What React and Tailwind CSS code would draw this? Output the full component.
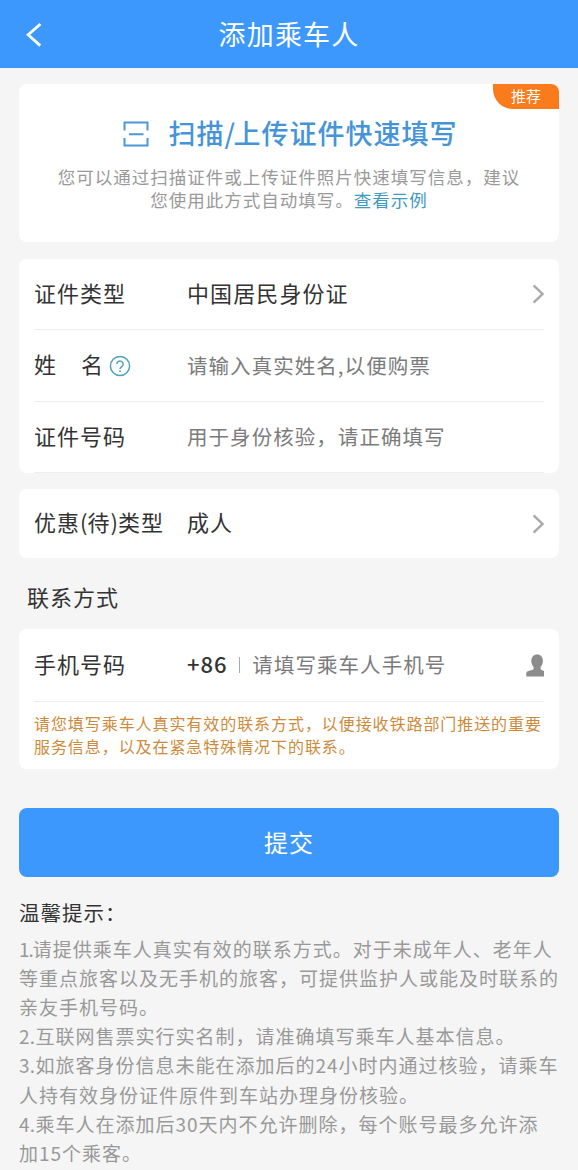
import clsx from 'clsx';

const tips = [
  ['1.', '请提供乘车人真实有效的联系方式。对于未成年人、老年人'],
  ['', '等重点旅客以及无手机的旅客，可提供监护人或能及时联系的'],
  ['', '亲友手机号码。'],
  ['2.', '互联网售票实行实名制，请准确填写乘车人基本信息。'],
  ['3.', '如旅客身份信息未能在添加后的24小时内通过核验，请乘车'],
  ['', '人持有效身份证件原件到车站办理身份核验。'],
  ['4.', '乘车人在添加后30天内不允许删除，每个账号最多允许添'],
  ['', '加15个乘客。'],
];

function BackIcon() {
  return (
    <svg width="18" height="26" viewBox="0 0 18 26" fill="none" stroke="#fff" strokeWidth="2.8">
      <path d="M16.4 3 4.2 13.8l12 10.8" />
    </svg>
  );
}

function ScanIcon() {
  return (
    <svg width="26" height="26" viewBox="0 0 26 26" fill="none" stroke="#4c97d6" strokeWidth="2">
      <path d="M1.5 9.5V1.5h23v8M1.5 17v7.5h23V17M6 13.2h14.5" />
    </svg>
  );
}

function HelpIcon() {
  return (
    <svg width="22" height="22" viewBox="0 0 22 22" fill="none" stroke="#4fa3b5" strokeWidth="1.5">
      <circle cx="11" cy="11" r="9.6" />
      <path d="M7.9 9.1a3.1 3.1 0 1 1 4.9 2.5c-1.2.8-1.8 1.2-1.8 2.5" />
      <path d="M11 15.2v1.7" />
    </svg>
  );
}

function ArrowIcon() {
  return (
    <svg width="12" height="20" viewBox="0 0 12 20" fill="none" stroke="#a9a9a9" strokeWidth="2.4">
      <path d="M1.6 1.4 10.5 10l-8.9 8.6" />
    </svg>
  );
}

function PersonIcon() {
  return (
    <svg width="18" height="23" viewBox="0 0 18 23" fill="#8c8c8c">
      <path d="M11.2.4c3.5 0 5.7 2.5 5.7 6.3 0 2.5-.9 4.8-2.3 6.3v1.6c0 .8.3 1.2.9 1.4l2.5 1v5.6H.3v-3c0-1.2.6-1.9 1.6-2.3l4.6-1.5c.8-.3 1.1-.7 1.1-1.4V13c-1.4-1.5-2.3-3.8-2.3-6.3 0-3.8 2.4-6.3 5.9-6.3Z" />
    </svg>
  );
}

function Card({ className, children }) {
  return <section className={clsx('mx-[19px] rounded-lg bg-white px-[15px]', className)}>{children}</section>;
}

function Row({ label, className, children }) {
  return (
    <div className={clsx('flex items-center', className)}>
      <div className="flex w-[153px] shrink-0 items-center pb-[5px] whitespace-nowrap text-[22px] tracking-[1px] text-[#333]">
        {label}
      </div>
      {children}
    </div>
  );
}

function Value({ children }) {
  return <span className="flex-1 pb-[5px] text-[22px] tracking-[1.1px] text-[#333]">{children}</span>;
}

function Placeholder({ children }) {
  return <span className="pb-[1px] whitespace-nowrap text-[20.5px] tracking-[1.05px] text-[#7b7b7b]">{children}</span>;
}

function App() {
  return (
    <div className="flex h-[1170px] w-[578px] flex-col overflow-hidden bg-[#f5f5f5] font-['Noto_Sans_CJK_SC',sans-serif] leading-none">
      <header className="grid h-[68px] shrink-0 grid-cols-[60px_1fr_60px] items-center bg-[#3c98fc]">
        <button className="pl-[24px]">
          <BackIcon />
        </button>
        <h1 className="pb-[2px] text-center text-[27px] tracking-[1.2px] text-white">添加乘车人</h1>
      </header>

      <Card className="relative mt-4 h-[158px] shrink-0 pt-[35px]">
        <span className="absolute top-0 right-0 flex h-[25px] w-[66px] items-center justify-center rounded-tr-lg rounded-bl-[20px] bg-[#f97b1c] pb-[3px] text-[15px] text-white">
          推荐
        </span>
        <div className="flex items-center justify-center gap-[19px] pl-[3px] text-[27px] font-medium tracking-[1px] text-[#4594d8]">
          <ScanIcon />
          <span className="pb-[2px]">
            扫描<span className="tracking-[-1.5px]">/</span>上传证件快速填写
          </span>
        </div>
        <p className="mt-[17px] text-center text-[17.5px] leading-[23px] tracking-[1px] whitespace-nowrap text-[#999]">
          您可以通过扫描证件或上传证件照片快速填写信息，建议
          <br />
          您使用此方式自动填写。<a className="text-[#3f9abf]">查看示例</a>
        </p>
      </Card>

      <Card className="mt-[17px] h-[214px] shrink-0">
        <Row label="证件类型" className="h-[71px] border-b border-[#eee]">
          <Value>中国居民身份证</Value>
          <ArrowIcon />
        </Row>
        <Row
          className="h-[72px] border-b border-[#eee]"
          label={
            <>
              <span className="mr-[24px]">姓</span>
              <span className="mr-[5px]">名</span>
              <span className="pt-[5px]">
                <HelpIcon />
              </span>
            </>
          }
        >
          <Placeholder>请输入真实姓名,以便购票</Placeholder>
        </Row>
        <Row label="证件号码" className="h-[71px] border-b border-[#eee]">
          <Placeholder>用于身份核验，请正确填写</Placeholder>
        </Row>
      </Card>

      <Card className="mt-4 h-[69px] shrink-0">
        <Row
          label={
            <span>
              优惠<span className="tracking-normal">(</span>待<span className="tracking-normal">)</span>类型
            </span>
          }
          className="h-[69px]"
        >
          <Value>成人</Value>
          <ArrowIcon />
        </Row>
      </Card>

      <h2 className="flex h-[71px] shrink-0 items-center pt-[5px] pl-[27px] text-[22px] tracking-[1px] text-[#333]">
        联系方式
      </h2>

      <Card className="h-[140px] shrink-0">
        <Row label="手机号码" className="h-[73px] border-b border-[#eee]">
          <span className="pb-[4px] text-[22px] font-medium tracking-[0.9px] text-[#333]">+86</span>
          <span className="mr-[12px] ml-[12px] h-4 w-px bg-[#aaa]" />
          <div className="flex flex-1">
            <Placeholder>请填写乘车人手机号</Placeholder>
          </div>
          <PersonIcon />
        </Row>
        <p className="mt-[10px] text-[16px] leading-[23px] tracking-[0.93px] whitespace-nowrap text-[#cd8a3a]">
          请您填写乘车人真实有效的联系方式，以便接收铁路部门推送的重要
          <br />
          服务信息，以及在紧急特殊情况下的联系。
        </p>
      </Card>

      <button className="mx-[19px] mt-[39px] h-[69px] shrink-0 rounded-lg bg-[#3c98fc] pb-[1px] text-[24px] tracking-[1px] text-white">
        提交
      </button>

      <div className="px-[19px] pt-[25px] whitespace-nowrap">
        <h3 className="text-[20.5px] tracking-[1px] text-[#333]">温馨提示：</h3>
        <div className="mt-[11px] text-[19px] leading-[29.2px] tracking-[1px] text-[#999]">
          {tips.map(([num, text]) => (
            <p key={text}>
              {num && <span className={num === '1.' ? 'tracking-[-1px]' : 'tracking-[0.3px]'}>{num}</span>}
              {text}
            </p>
          ))}
        </div>
      </div>
    </div>
  );
}

export default App;
